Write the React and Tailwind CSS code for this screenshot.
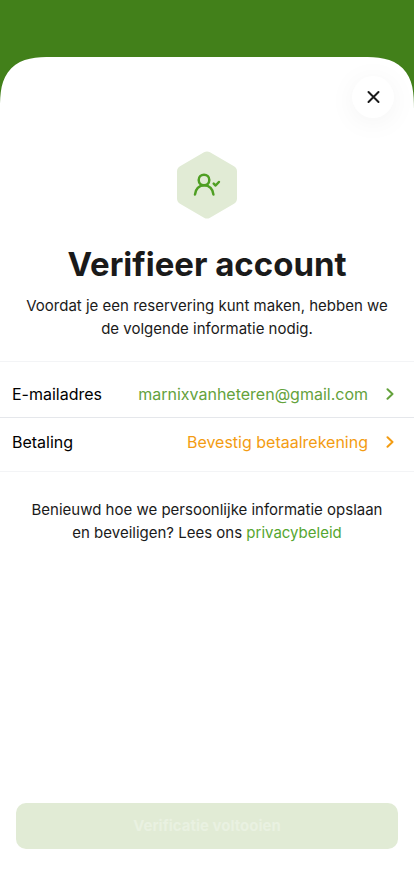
const ROWS = [
  { label: 'E-mailadres', value: 'marnixvanheteren@gmail.com', color: 'text-[#64a23c]' },
  { label: 'Betaling', value: 'Bevestig betaalrekening', color: 'text-[#f39c12]' },
]

function CloseIcon() {
  return (
    <svg width="14" height="14" viewBox="0 0 14 14" fill="none" stroke="currentColor" strokeWidth="2" strokeLinecap="round">
      <path d="M2.5 2l10 10M12.5 2l-10 10" />
    </svg>
  )
}

function Chevron() {
  return (
    <svg width="8" height="12" viewBox="0 0 8 12" fill="none" stroke="currentColor" strokeWidth="2" strokeLinecap="round" strokeLinejoin="round">
      <path d="M1.5 1.2L6.5 6l-5 4.8" />
    </svg>
  )
}

// Hexagon badge with a verified user inside
function UserBadge() {
  return (
    <svg width="60" height="68" viewBox="0 0 60 68" fill="none" aria-hidden="true">
      <path
        d="M27 1.3a6 6 0 0 1 6 0L57 15.2a6 6 0 0 1 3 5.2v27.2a6 6 0 0 1-3 5.2L33 66.7a6 6 0 0 1-6 0L3 52.8a6 6 0 0 1-3-5.2V20.4a6 6 0 0 1 3-5.2z"
        fill="#e1ebd5"
      />
      <g stroke="#4f9f23" strokeWidth="2.5" strokeLinecap="round" strokeLinejoin="round">
        <circle cx="27" cy="29" r="5.3" />
        <path d="M18 43.5c.4-5.2 4-9.2 9.2-9.2s8.8 4 9.2 9.2" />
        <path d="M36.7 32.7l1.9 1.8 3.3-3.5" />
      </g>
    </svg>
  )
}

function App() {
  return (
    <div className="flex min-h-screen flex-col bg-[#42801a] pt-[57px] font-['Inter',sans-serif] text-[#1a1a1a]">
      <main className="flex flex-1 flex-col rounded-t-[52px] bg-white [corner-shape:superellipse(1.5)]">
        <div className="flex justify-end px-5 pt-[19px]">
          <button
            type="button"
            aria-label="Sluiten"
            className="flex size-[42px] items-center justify-center rounded-full bg-white shadow-[0_4px_28px_rgba(0,0,0,0.05)]"
          >
            <CloseIcon />
          </button>
        </div>

        <div className="flex flex-col items-center px-4 pt-[33px] text-center">
          <UserBadge />
          <h1 className="mt-[25px] text-[33px] leading-10 font-bold">Verifieer account</h1>
          <p className="mt-[10px] text-[15px] leading-[23px]">
            Voordat je een reservering kunt maken, hebben we de volgende informatie nodig.
          </p>
        </div>

        <ul className="mt-[21px] border-y border-gray-100 pt-2 pb-[5px] text-base text-black">
          {ROWS.map((row) => (
            <li key={row.label} className="flex h-12 border-b border-gray-200 last:border-b-0">
              <button type="button" className="flex w-full items-center px-3 text-left">
                <span>{row.label}</span>
                <span className={`ml-auto ${row.color}`}>{row.value}</span>
                <span className={`mr-2 ml-[18px] ${row.color}`}>
                  <Chevron />
                </span>
              </button>
            </li>
          ))}
        </ul>

        <p className="mt-[26px] px-6 text-center text-[15px] leading-[23px]">
          Benieuwd hoe we persoonlijke informatie opslaan en beveiligen? Lees ons{' '}
          <a href="#privacybeleid" className="text-[#55a630]">privacybeleid</a>
        </p>

        <div className="mt-auto px-4 pb-[47px]">
          <button type="button" disabled className="h-[46px] w-full rounded-[10px] bg-[#e1ebd5] text-[15px] font-bold text-[#e9f1e1]">
            Verificatie voltooien
          </button>
        </div>
      </main>
    </div>
  )
}

export default App
